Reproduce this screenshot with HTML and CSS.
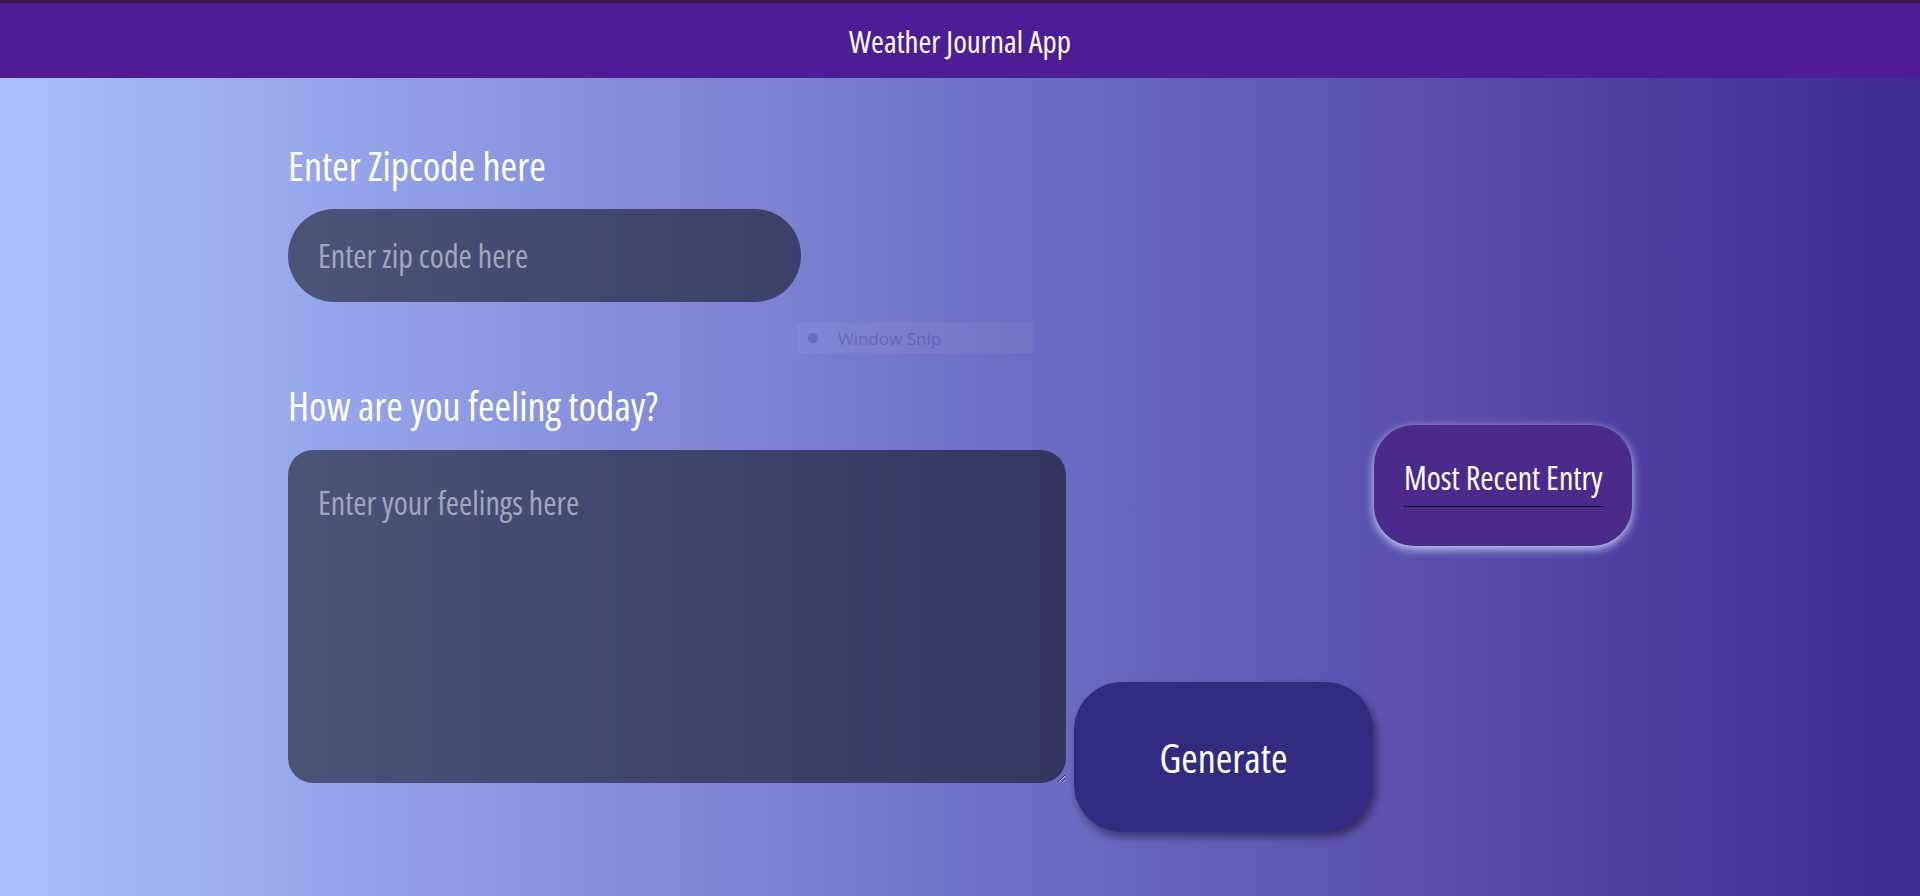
FILE: index.html
```html
<!DOCTYPE html>
<html lang="en">
<head>
<meta charset="utf-8">
<title>Weather Journal App</title>
<link rel="stylesheet" href="styles.css">
</head>
<body>
<header class="topbar">
  <h1 class="app-title">Weather Journal App</h1>
</header>
<main class="app">
  <section class="form-col">
    <label class="field-label" for="zip">Enter Zipcode here</label>
    <input class="zip-input" id="zip" type="text" placeholder="Enter zip code here">
    <label class="field-label feel-label" for="feelings">How are you feeling today?</label>
    <div class="feel-row">
      <textarea class="feel-input" id="feelings" placeholder="Enter your feelings here"></textarea>
      <button class="generate-btn" type="button">Generate</button>
    </div>
  </section>
  <section class="entry-col">
    <div class="entry-card">
      <div class="entry-title">Most Recent Entry</div>
    </div>
  </section>
</main>
<div class="snip-overlay">
  <span class="snip-icon"><span class="snip-dot"></span></span>
  <span class="snip-text">Window Snip</span>
</div>
</body>
</html>
```
FILE: styles.css
```css
* { box-sizing: border-box; }

html, body {
  margin: 0;
  padding: 0;
}

body {
  min-height: 100vh;
  background: linear-gradient(90deg, #a9c0fd 0%, #7172c9 50%, #3f2a90 100%);
  font-family: "Open Sans", "Roboto", sans-serif;
  font-stretch: 75%;
  color: #fff;
  position: relative;
}

.topbar {
  height: 78px;
  border-top: 3px solid #3a1746;
  background: #4d1d96;
  display: flex;
  align-items: center;
  justify-content: center;
}

.app-title {
  margin: 0;
  font-size: 31px;
  line-height: 40px;
  font-weight: 400;
  color: #fff;
}

.app {
  display: flex;
  padding-left: 288px;
  padding-top: 68px;
}

.form-col {
  display: flex;
  flex-direction: column;
  width: 1085px;
}

.field-label {
  display: block;
  font-size: 40px;
  line-height: 40px;
  font-weight: 400;
  color: #fff;
}

.zip-input {
  margin-top: 23px;
  width: 513px;
  height: 93px;
  border: none;
  border-radius: 47px;
  background: rgba(0, 0, 0, 0.5);
  padding: 0 30px;
  font-family: inherit;
  font-stretch: 75%;
  font-size: 32px;
  color: #fff;
  outline: none;
}

.zip-input::placeholder,
.feel-input::placeholder {
  color: #a3a6ba;
}

.feel-label {
  margin-top: 84px;
}

.feel-row {
  display: flex;
  align-items: flex-start;
  gap: 8px;
  margin-top: 24px;
}

.feel-input {
  width: 778px;
  height: 333px;
  border: none;
  border-radius: 25px;
  background: rgba(0, 0, 0, 0.5);
  padding: 33px 30px 0 30px;
  font-family: inherit;
  font-stretch: 75%;
  font-size: 32px;
  line-height: 40px;
  color: #fff;
  outline: none;
  flex: none;
}

.generate-btn {
  margin-top: 232px;
  width: 299px;
  height: 150px;
  border: none;
  border-radius: 48px;
  background: #312b82;
  color: #fff;
  font-family: inherit;
  font-stretch: 75%;
  font-size: 40px;
  font-weight: 400;
  box-shadow: 3px 5px 8px rgba(0, 0, 0, 0.45);
  flex: none;
}

.entry-col {
  padding-top: 279px;
  margin-left: 1px;
}

.entry-card {
  width: 258px;
  height: 121px;
  border-radius: 40px;
  background: #4a2a8a;
  padding: 33px 30px 0 30px;
  box-shadow: 0 3px 10px rgba(215, 232, 255, 0.9);
}

.entry-title {
  display: inline-block;
  font-size: 32px;
  line-height: 40px;
  padding-bottom: 8px;
  border-bottom: 1px solid #000;
  color: #fff;
  white-space: nowrap;
}

.snip-overlay {
  position: absolute;
  left: 797px;
  top: 323px;
  width: 236px;
  height: 30px;
  display: flex;
  align-items: center;
  background: rgba(255, 255, 255, 0.05);
  font-family: "Open Sans", sans-serif;
  font-stretch: 100%;
  pointer-events: none;
}

.snip-icon {
  width: 31px;
  height: 30px;
  display: flex;
  align-items: center;
  justify-content: center;
  background: rgba(110, 150, 255, 0.12);
}

.snip-dot {
  width: 10px;
  height: 10px;
  border-radius: 50%;
  background: rgba(70, 70, 160, 0.4);
}

.snip-text {
  margin-left: 10px;
  font-size: 17px;
  color: rgba(70, 70, 165, 0.45);
}
```
